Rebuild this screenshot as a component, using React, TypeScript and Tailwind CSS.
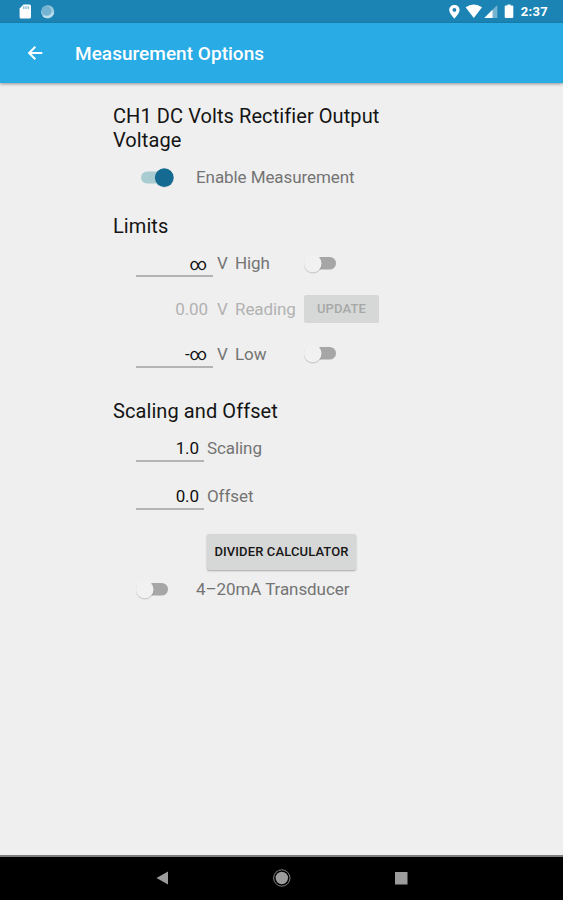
import type { ReactNode } from "react";

function Toggle({ on = false }: { on?: boolean }) {
  return on ? (
    <svg width="40" height="24" viewBox="0 0 40 24" className="shrink-0">
      <rect x="5" y="6.4" width="29" height="12" rx="6" fill="#a9cbd2" />
      <circle cx="28.3" cy="13.4" r="9.6" fill="#000" opacity="0.06" />
      <circle cx="28.3" cy="12.6" r="9.4" fill="#156a91" />
    </svg>
  ) : (
    <svg width="40" height="24" viewBox="0 0 40 24" className="shrink-0">
      <rect x="7" y="5" width="30" height="12.6" rx="6.3" fill="#a6a6a6" />
      <circle cx="13.8" cy="12.6" r="9.1" fill="#000" opacity="0.1" />
      <circle cx="13.8" cy="12.1" r="8.9" fill="#000" opacity="0.06" />
      <circle cx="13.8" cy="11.5" r="8.8" fill="#f1f1f1" />
    </svg>
  );
}

function Heading({ children }: { children: ReactNode }) {
  return <h2 className="text-[20px] leading-6 tracking-[0.08px] text-[#141414]">{children}</h2>;
}

function Field({ value, wide = false, tall = false }: { value: string; wide?: boolean; tall?: boolean }) {
  return (
    <div
      className={`${wide ? "w-[77px] pr-[6px]" : "w-[68px] pr-[5px]"} ${tall ? "mb-[2px] h-[30px] pt-[3px]" : "mb-[3px] h-[29px] pt-[4px]"} flex shrink-0 items-center justify-end border-b-2 border-[#b4b4b4] text-[17px] leading-5 text-[#111]`}
    >
      {value}
    </div>
  );
}

export default function App() {
  return (
    <div className="flex h-[900px] w-[563px] flex-col overflow-hidden bg-[#efefef] font-['Roboto',sans-serif] text-[17px] tracking-[-0.08px] text-[#747474]">
      <div className="flex h-[23px] shrink-0 items-center bg-[#1b84b4] pl-[19px] pr-[15px]">
        <svg width="38" height="23" viewBox="0 0 38 23">
          <path d="M4.5 4.5H10.5Q12 4.5 12 6V17Q12 18.5 10.5 18.5H2Q.6 18.5.6 17V8.5Z" fill="#fff" />
          <path d="M4.8 6.2V9M7 6.2V9M9.2 6.2V9" stroke="#66aacb" strokeWidth="1.1" />
          <circle cx="28.7" cy="11.8" r="6.6" fill="#9fcbdf" />
          <circle cx="27.6" cy="10.8" r="4.8" fill="#74b3d1" />
          <path d="M24 16Q30 19 34.5 13" stroke="#c4e2ef" strokeWidth="1.4" fill="none" />
        </svg>
        <div className="grow" />
        <svg width="68" height="23" viewBox="0 0 68 23" fill="#fff">
          <path fillRule="evenodd" d="M5.4 5C2.4 5 .2 7.1 .2 9.9C.2 13.2 5.4 18.6 5.4 18.6S10.6 13.2 10.6 9.9C10.6 7.1 8.4 5 5.4 5ZM5.4 8A1.9 1.9 0 1 1 5.4 11.8A1.9 1.9 0 1 1 5.4 8Z" />
          <path d="M16.6 7.3Q24.8 1.6 33 7.3L24.8 18Z" />
          <path d="M35.3 18L48.3 5V18Z" fillOpacity=".4" />
          <path d="M35.3 18L43.5 9.8V18Z" />
          <path d="M58.5 4.5H61.5V5.5H63.3Q64.3 5.5 64.3 6.5V17Q64.3 18 63.3 18H56.7Q55.7 18 55.7 17V6.5Q55.7 5.5 56.7 5.5H58.5Z" />
        </svg>
        <span className="ml-[4px] pt-px text-[13px] font-bold leading-5 tracking-[0.3px] text-white">2:37</span>
      </div>
      <header className="z-10 flex h-[60px] shrink-0 items-center bg-[#29abe5] pl-[26px] shadow-[0_1px_3px_rgba(0,0,0,0.4)]">
        <svg width="18" height="18" viewBox="0 0 18 18" fill="none" stroke="#fff" strokeWidth="2">
          <path d="M16.3 9H3.5M9.3 2.8L3.1 9L9.3 15.2" />
        </svg>
        <h1 className="ml-[31px] pt-px text-[19px] font-medium leading-6 tracking-[0.03px] text-white">Measurement Options</h1>
      </header>
      <main className="flex grow flex-col pl-[113px] pt-[21px]">
        <div className="w-[290px]">
          <Heading>CH1 DC Volts Rectifier Output Voltage</Heading>
        </div>
        <div className="flex h-[50px] items-center pl-[23px]">
          <Toggle on />
          <span className="ml-[20px] pt-px">Enable Measurement</span>
        </div>
        <div className="h-[39px] pt-3">
          <Heading>Limits</Heading>
        </div>
        <div className="flex h-[46px] items-center pl-[23px]">
          <Field value="∞" wide />
          <span className="ml-1 w-[18px]">V</span>
          <span className="w-[64px]">High</span>
          <Toggle />
        </div>
        <div className="flex h-[44px] items-center pl-[23px] text-[#b2b2b2]">
          <span className="w-[77px] pr-[5px] pt-px text-right">0.00</span>
          <span className="ml-1 w-[18px] pt-px">V</span>
          <span className="w-[69px] pt-px">Reading</span>
          <button className="mb-px h-[28px] w-[75px] rounded-[2px] bg-[#d6d8d7] text-[13px] font-medium tracking-[0.15px] text-[#a6a8a7]">UPDATE</button>
        </div>
        <div className="flex h-[46px] items-center pl-[23px]">
          <Field value="-∞" wide tall />
          <span className="ml-1 w-[18px] pt-px">V</span>
          <span className="w-[64px] pt-px">Low</span>
          <Toggle />
        </div>
        <div className="h-[48px] pt-[22px]">
          <Heading>Scaling and Offset</Heading>
        </div>
        <div className="flex h-[47px] items-center pl-[23px]">
          <Field value="1.0" />
          <span className="ml-[3px]">Scaling</span>
        </div>
        <div className="flex h-[48px] items-center pl-[23px]">
          <Field value="0.0" tall />
          <span className="ml-[3px] pt-px">Offset</span>
        </div>
        <button className="ml-[94px] mt-[14px] h-[36px] w-[149px] shrink-0 rounded-[2px] bg-[#d6d7d7] text-[13px] font-medium tracking-[0.12px] text-[#161616] shadow-[0_1px_2px_rgba(0,0,0,0.3)]">
          DIVIDER CALCULATOR
        </button>
        <div className="flex h-[39px] items-center pl-[18px] pt-px">
          <Toggle />
          <span className="ml-[25px]">4–20mA Transducer</span>
        </div>
      </main>
      <nav className="flex h-[45px] shrink-0 items-center border-t-2 border-[#7d7d7d] bg-black">
        <svg width="563" height="43" viewBox="0 0 563 43" fill="#9c9c9c">
          <path d="M156.5 21L168 14.5V27.5Z" />
          <circle cx="281.8" cy="21" r="8.2" fill="none" stroke="#808080" strokeWidth="1" />
          <circle cx="281.8" cy="21" r="6.2" />
          <rect x="395" y="15" width="12.5" height="12.5" />
        </svg>
      </nav>
    </div>
  );
}
